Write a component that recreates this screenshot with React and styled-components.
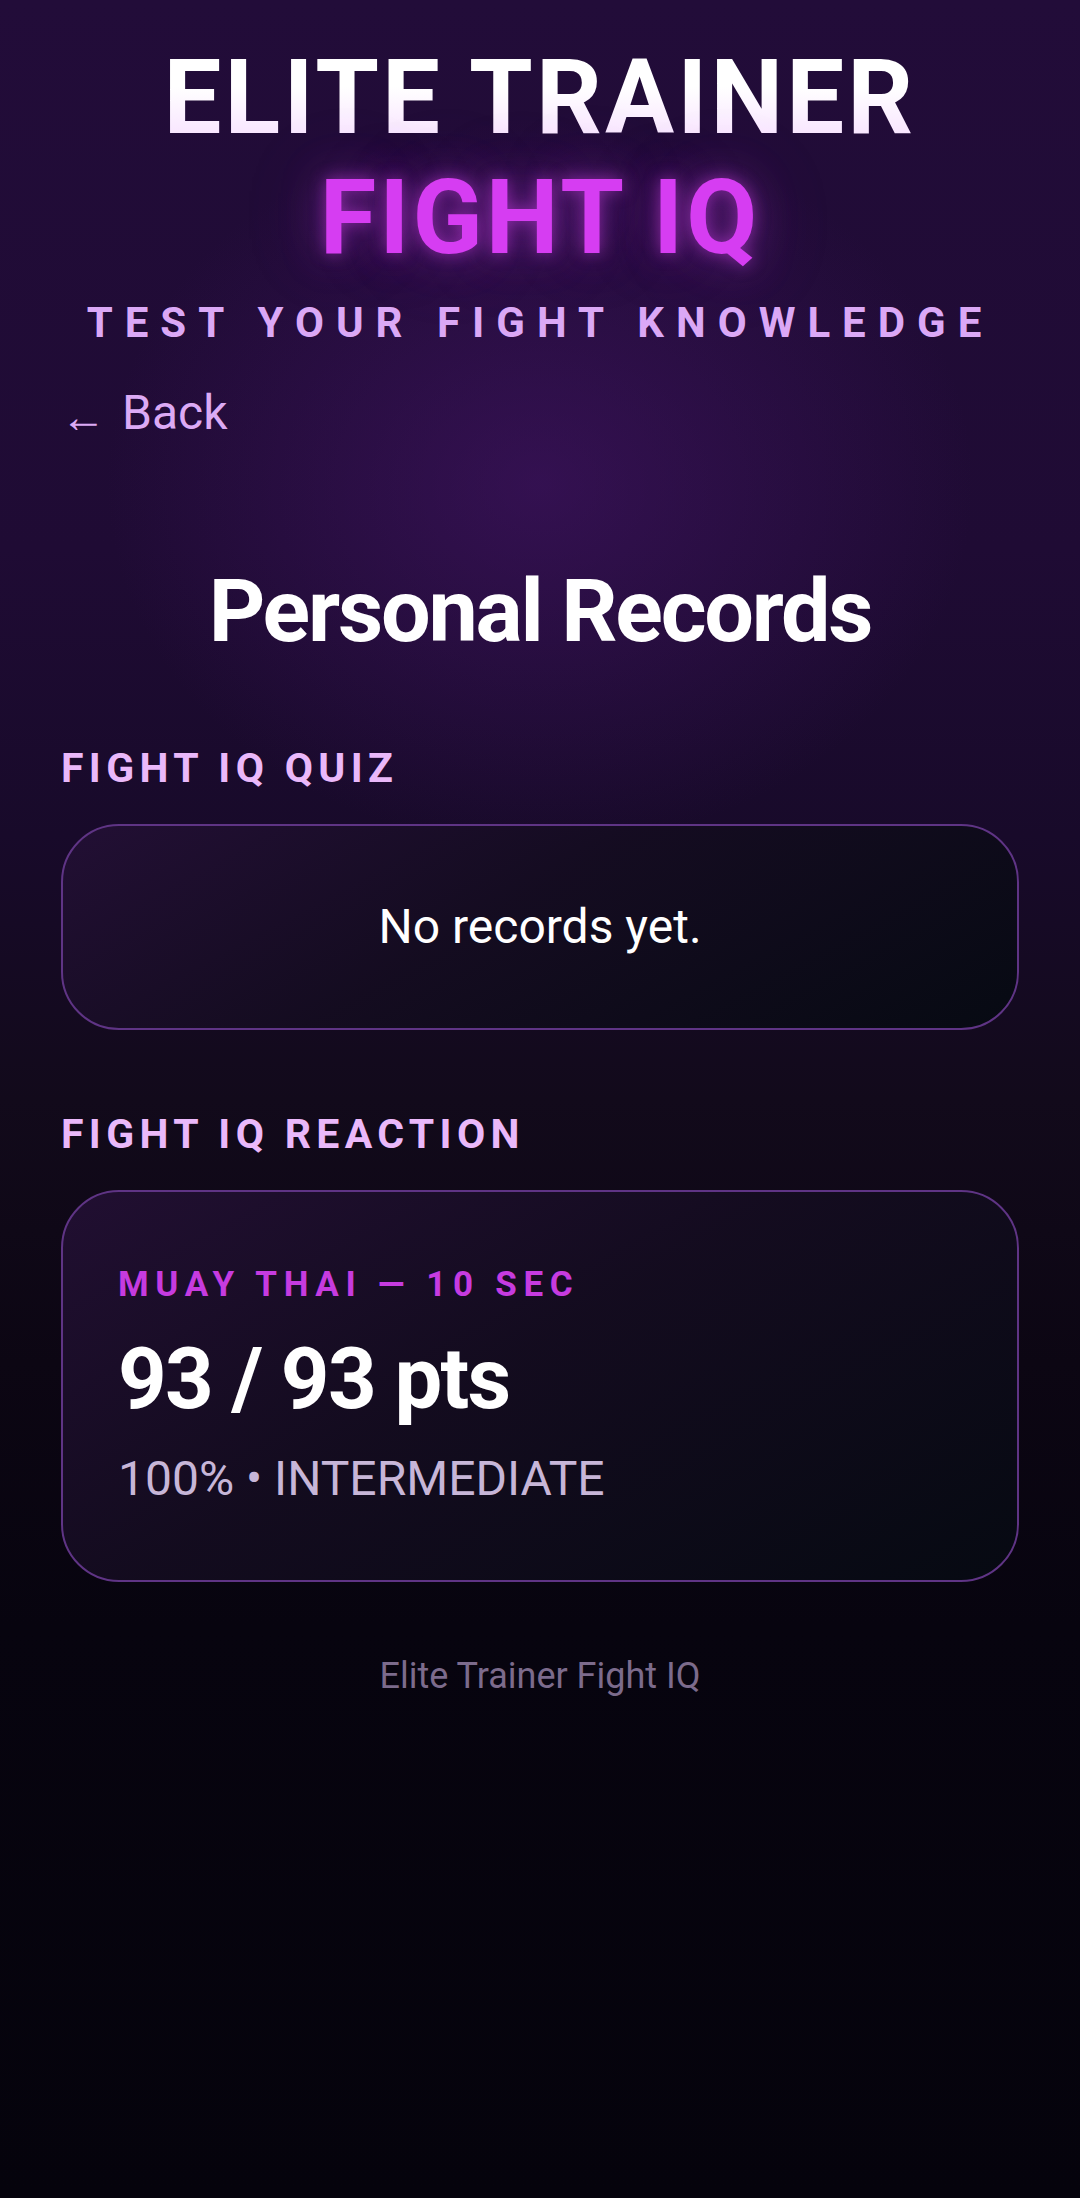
import React from "react";
import styled, { createGlobalStyle } from "styled-components";

const GlobalStyle = createGlobalStyle`
  * { box-sizing: border-box; }
  html, body {
    margin: 0;
    padding: 0;
    background: #05030c;
  }
  body {
    font-family: Roboto, "Noto Sans", "Liberation Sans", sans-serif;
    -webkit-font-smoothing: antialiased;
  }
`;

const Page = styled.div`
  min-height: 2198px;
  padding: 41px 61px 80px;
  color: #fff;
  background:
    radial-gradient(ellipse 620px 520px at 50% 22%, rgba(80, 24, 120, 0.42), rgba(80, 24, 120, 0) 70%),
    linear-gradient(
      180deg,
      #220c39 0%,
      #1f0b34 25%,
      #180a2a 38%,
      #120a1b 50%,
      #0c0613 62%,
      #07040f 74%,
      #05030c 100%
    );
`;

const Header = styled.header`
  display: flex;
  flex-direction: column;
  align-items: center;
  text-align: center;
`;

const Brand = styled.h1`
  margin: 0;
  font-size: 103px;
  line-height: 1.1;
  font-weight: 700;
  letter-spacing: 0.03em;
  background: linear-gradient(180deg, #ffffff 40%, #f6dcff 100%);
  -webkit-background-clip: text;
  background-clip: text;
  color: transparent;
`;

const Accent = styled.h2`
  margin: 7px 0 0;
  font-size: 103px;
  line-height: 1.1;
  font-weight: 700;
  letter-spacing: 0.03em;
  color: #d63df2;
  text-shadow: 0 0 16px rgba(217, 70, 239, 0.5), 0 0 44px rgba(190, 60, 230, 0.4),
    0 0 80px rgba(170, 50, 220, 0.25);
`;

const Tagline = styled.p`
  margin: 23px 0 0;
  font-size: 42px;
  line-height: 1.2;
  font-weight: 700;
  letter-spacing: 12px;
  color: #dba8f6;
`;

const BackLink = styled.a`
  display: inline-flex;
  align-items: center;
  gap: 16px;
  margin-top: 36px;
  font-size: 48px;
  line-height: 1.2;
  color: #dcaaf5;
  text-decoration: none;
  cursor: pointer;
`;

const Arrow = styled.span`
  font-size: 45px;
  line-height: 1;
  transform: translateY(4px);
`;

const Title = styled.h3`
  margin: 116px 0 0;
  text-align: center;
  font-size: 88px;
  line-height: 1.2;
  font-weight: 700;
  letter-spacing: -0.025em;
  color: #fff;
`;

const Section = styled.section`
  display: flex;
  flex-direction: column;
  gap: 31px;
  margin-top: ${(p) => p.$top}px;
`;

const SectionLabel = styled.h4`
  margin: 0;
  font-size: 41px;
  line-height: 1.2;
  font-weight: 700;
  letter-spacing: 0.13em;
  color: #eab8fa;
`;

const Card = styled.div`
  border: 2px solid #5f3485;
  border-radius: 58px;
  padding: 72px 55px;
  background: linear-gradient(
    150deg,
    rgba(36, 16, 54, 0.85) 0%,
    rgba(20, 12, 32, 0.9) 45%,
    rgba(6, 10, 18, 0.95) 100%
  );
  text-align: ${(p) => (p.$center ? "center" : "left")};
`;

const EmptyText = styled.p`
  margin: 0;
  font-size: 48px;
  line-height: 1.2;
  color: #fff;
`;

const RecordMode = styled.div`
  font-size: 35px;
  line-height: 1.2;
  font-weight: 700;
  letter-spacing: 0.19em;
  color: #c63be0;
`;

const RecordScore = styled.div`
  margin-top: 22px;
  font-size: 85px;
  line-height: 1.2;
  font-weight: 700;
  letter-spacing: -0.02em;
  color: #fff;
`;

const RecordMeta = styled.div`
  margin-top: 20px;
  font-size: 48px;
  line-height: 1.2;
  color: #c7b6d8;
`;

const Footer = styled.footer`
  margin-top: 73px;
  text-align: center;
  font-size: 36px;
  line-height: 1.2;
  color: #7c6b8c;
`;

const records = {
  quiz: [],
  reaction: [
    { mode: "MUAY THAI — 10 SEC", score: 93, max: 93, pct: 100, level: "INTERMEDIATE" },
  ],
};

export default function App() {
  return (
    <>
      <GlobalStyle />
      <Page>
        <Header>
          <Brand>ELITE TRAINER</Brand>
          <Accent>FIGHT IQ</Accent>
          <Tagline>TEST YOUR FIGHT KNOWLEDGE</Tagline>
        </Header>

        <BackLink>
          <Arrow>←</Arrow>
          Back
        </BackLink>

        <Title>Personal Records</Title>

        <Section $top={81}>
          <SectionLabel>FIGHT IQ QUIZ</SectionLabel>
          {records.quiz.length === 0 && (
            <Card $center>
              <EmptyText>No records yet.</EmptyText>
            </Card>
          )}
        </Section>

        <Section $top={80}>
          <SectionLabel>FIGHT IQ REACTION</SectionLabel>
          {records.reaction.map((r) => (
            <Card key={r.mode}>
              <RecordMode>{r.mode}</RecordMode>
              <RecordScore>
                {r.score} / {r.max} pts
              </RecordScore>
              <RecordMeta>
                {r.pct}% • {r.level}
              </RecordMeta>
            </Card>
          ))}
        </Section>

        <Footer>Elite Trainer Fight IQ</Footer>
      </Page>
    </>
  );
}
